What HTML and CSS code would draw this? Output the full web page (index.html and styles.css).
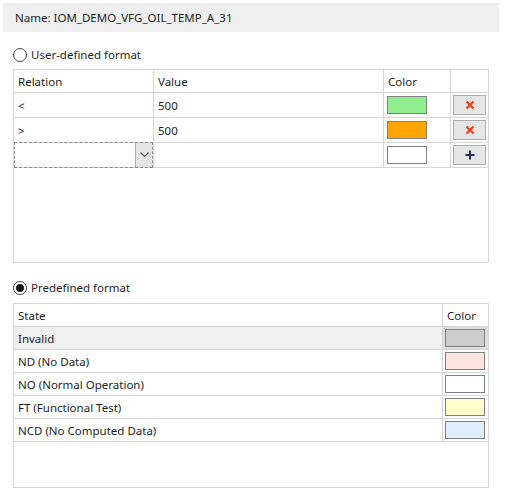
FILE: index.html
```html
<!DOCTYPE html>
<html>
<head>
<meta charset="utf-8">
<link rel="stylesheet" href="styles.css">
</head>
<body>
<div class="name-bar">Name: IOM_DEMO_VFG_OIL_TEMP_A_31</div>

<div class="radio-row first">
  <span class="radio"></span>
  <span class="radio-label">User-defined format</span>
</div>

<div class="grid user-grid">
  <div class="row head">
    <div class="cell">Relation</div>
    <div class="cell">Value</div>
    <div class="cell">Color</div>
    <div class="cell last"></div>
  </div>
  <div class="row">
    <div class="cell">&lt;</div>
    <div class="cell">500</div>
    <div class="cell swatch-cell"><span class="swatch" style="background:#90ee90"></span></div>
    <div class="cell last btn-cell"><span class="btn"><svg width="10" height="10" viewBox="0 0 10 10"><path d="M1.5 1.5 L8.5 8.5 M8.5 1.5 L1.5 8.5" stroke="#f2401c" stroke-width="2.4" fill="none"/></svg></span></div>
  </div>
  <div class="row">
    <div class="cell">&gt;</div>
    <div class="cell">500</div>
    <div class="cell swatch-cell"><span class="swatch" style="background:#ffa500"></span></div>
    <div class="cell last btn-cell"><span class="btn"><svg width="10" height="10" viewBox="0 0 10 10"><path d="M1.5 1.5 L8.5 8.5 M8.5 1.5 L1.5 8.5" stroke="#f2401c" stroke-width="2.4" fill="none"/></svg></span></div>
  </div>
  <div class="row">
    <div class="cell combo-cell">
      <div class="combo">
        <span class="combo-text"></span>
        <span class="combo-btn"><svg width="9" height="6" viewBox="0 0 9 6"><path d="M0.5 0.5 L4.5 4.5 L8.5 0.5" stroke="#555" stroke-width="1.1" fill="none"/></svg></span>
      </div>
    </div>
    <div class="cell"></div>
    <div class="cell swatch-cell"><span class="swatch" style="background:#ffffff"></span></div>
    <div class="cell last btn-cell"><span class="btn"><svg width="10" height="10" viewBox="0 0 10 10"><path d="M5 0.5 V9.5 M0.5 5 H9.5" stroke="#2b2b5c" stroke-width="2" fill="none"/></svg></span></div>
  </div>
</div>

<div class="radio-row second">
  <span class="radio checked"></span>
  <span class="radio-label">Predefined format</span>
</div>

<div class="grid state-grid">
  <div class="row head">
    <div class="cell">State</div>
    <div class="cell last">Color</div>
  </div>
  <div class="row selected">
    <div class="cell">Invalid</div>
    <div class="cell last swatch-cell"><span class="swatch" style="background:#cccccc"></span></div>
  </div>
  <div class="row">
    <div class="cell">ND (No Data)</div>
    <div class="cell last swatch-cell"><span class="swatch" style="background:#ffe4e1"></span></div>
  </div>
  <div class="row">
    <div class="cell">NO (Normal Operation)</div>
    <div class="cell last swatch-cell"><span class="swatch" style="background:#ffffff"></span></div>
  </div>
  <div class="row">
    <div class="cell">FT (Functional Test)</div>
    <div class="cell last swatch-cell"><span class="swatch" style="background:#ffffcc"></span></div>
  </div>
  <div class="row">
    <div class="cell">NCD (No Computed Data)</div>
    <div class="cell last swatch-cell"><span class="swatch" style="background:#e0eeff"></span></div>
  </div>
</div>
</body>
</html>
```

FILE: styles.css
```css
html, body {
  margin: 0;
  padding: 0;
  background: #ffffff;
}
body {
  font-family: "Noto Sans", "Liberation Sans", sans-serif;
  font-size: 11.5px;
  color: #1e1e1e;
}
.name-bar {
  margin: 3px 6px 0 3px;
  height: 29px;
  line-height: 29px;
  padding-left: 12px;
  background: #efefef;
}
.radio-row {
  display: flex;
  align-items: center;
  height: 17px;
  margin-left: 13px;
}
.radio-row.first { margin-top: 14px; }
.radio-row.second { margin-top: 16px; }
.radio {
  box-sizing: border-box;
  width: 14px;
  height: 14px;
  border: 1px solid #444;
  border-radius: 50%;
  display: flex;
  align-items: center;
  justify-content: center;
  background: #fff;
}
.radio.checked::after {
  content: "";
  width: 8px;
  height: 8px;
  border-radius: 50%;
  background: #1a1a1a;
}
.radio-label {
  margin-left: 4px;
}
.grid {
  box-sizing: border-box;
  margin-left: 13px;
  width: 476px;
  border: 1px solid #d6d6d6;
}
.user-grid {
  margin-top: 6px;
  height: 194px;
}
.state-grid {
  margin-top: 7px;
  height: 185px;
}
.row {
  display: grid;
  height: 25px;
  box-sizing: border-box;
  border-bottom: 1px solid #d6d6d6;
}
.user-grid .row { grid-template-columns: 140px 230px 67px 37px; }
.user-grid .row.head { height: 23px; }
.state-grid .row { grid-template-columns: 429px 45px; height: 23px; }
.cell {
  box-sizing: border-box;
  border-right: 1px solid #d6d6d6;
  padding-left: 4px;
  display: flex;
  align-items: center;
  white-space: nowrap;
}
.cell.last { border-right: none; }
.swatch-cell { padding-left: 2px; }
.user-grid .swatch-cell { padding-left: 3px; }
.swatch {
  box-sizing: border-box;
  display: block;
  width: 40px;
  height: 18px;
  border: 1px solid #808080;
}
.btn-cell { padding-left: 2px; }
.btn {
  box-sizing: border-box;
  display: flex;
  align-items: center;
  justify-content: center;
  width: 33px;
  height: 20px;
  background: #e6e6e6;
  border: 1px solid #adadad;
}
.row.selected .cell { background: #f0f0f0; }
.row.selected .cell.last { background: #dedede; }
.combo-cell {
  padding: 0;
  align-items: stretch;
}
.combo {
  flex: 1;
  display: flex;
  margin: -1px 0 -1px 0;
  border: 1px dashed #8a8a8a;
}
.combo-text { flex: 1; }
.combo-btn {
  box-sizing: border-box;
  width: 17px;
  background: #e6e6e6;
  border-left: 1px solid #adadad;
  display: flex;
  align-items: center;
  justify-content: center;
}
```
